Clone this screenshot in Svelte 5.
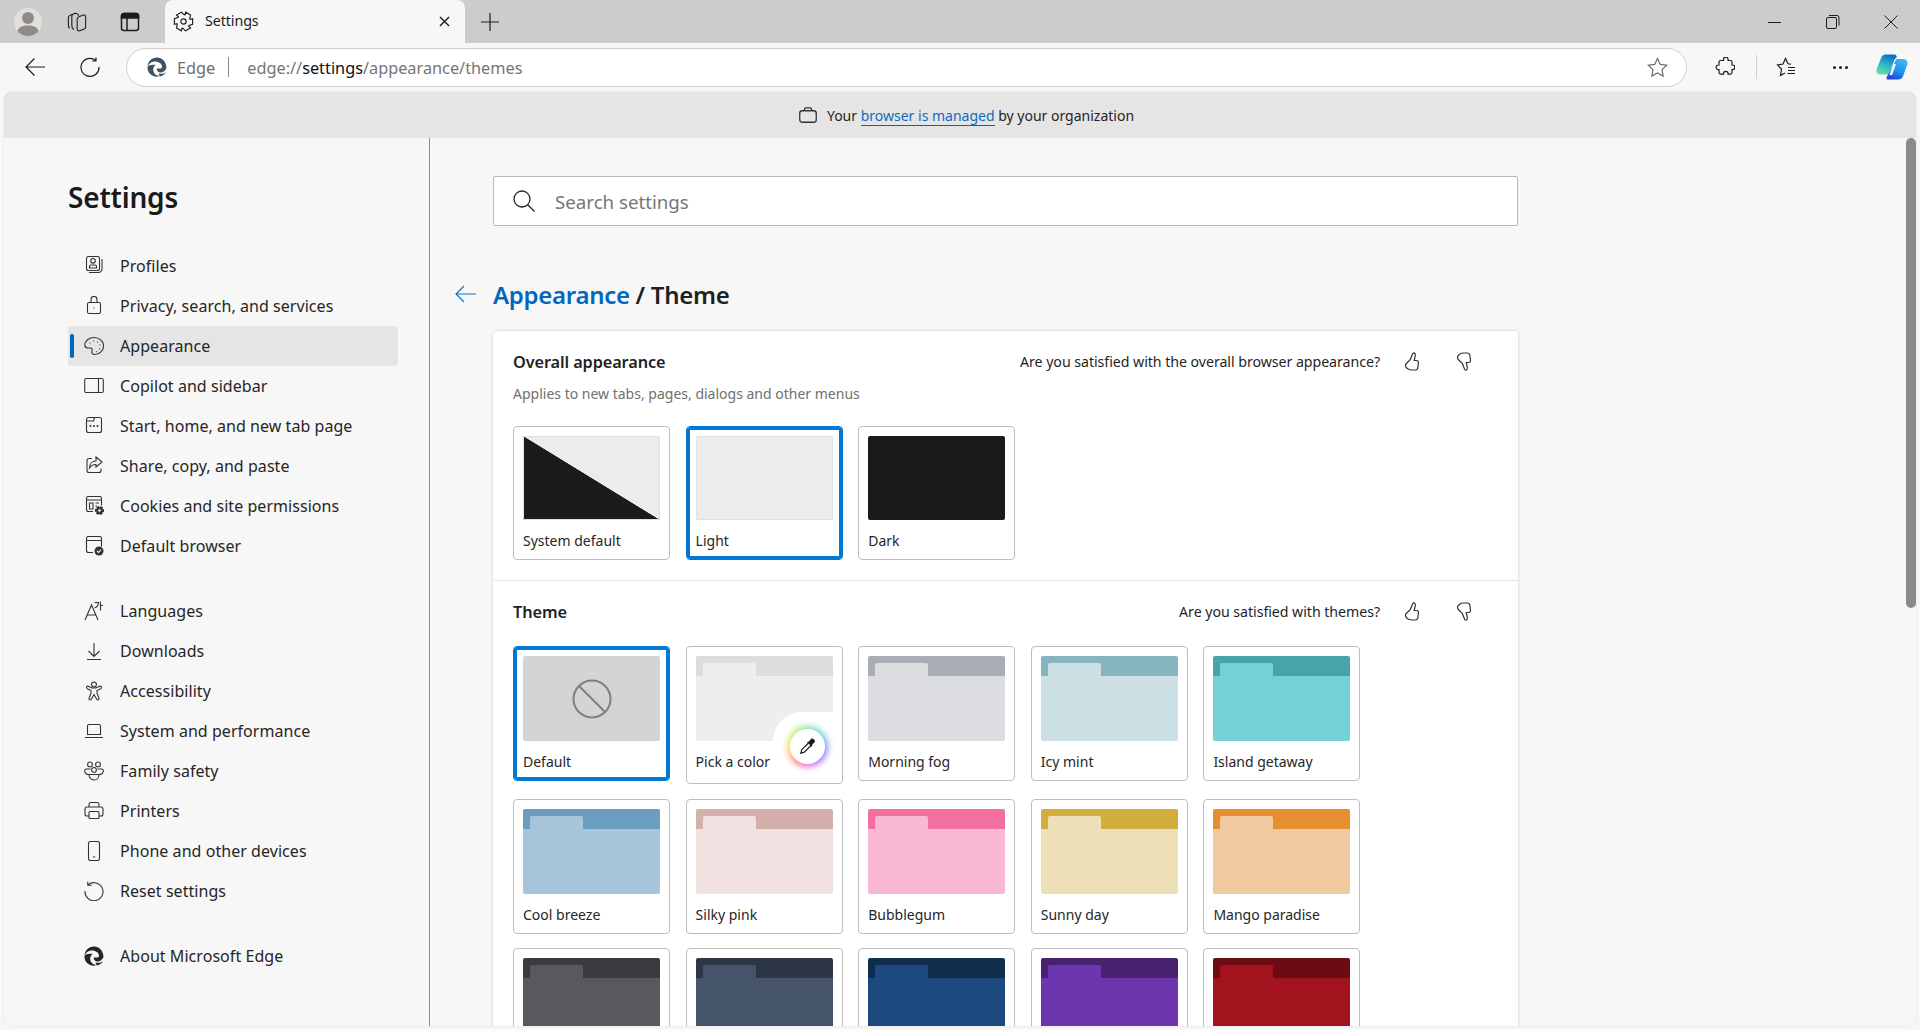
<script lang="ts">
	const icons: Record<string, string> = {
		profiles: 'M4.5 .5h9a2 2 0 0 1 2 2v10a2 2 0 0 1-2 2h-9a2 2 0 0 1-2-2v-10a2 2 0 0 1 2-2z M9 2.5a2.3 2.3 0 1 1 0 4.6 2.3 2.3 0 0 1 0-4.6z M5.5 12v-1.5A1.5 1.5 0 0 1 7 9h4a1.5 1.5 0 0 1 1.5 1.5V12z M18 3v10a3.5 3.5 0 0 1-3.5 3.5H5',
		privacy: 'M5 6.5h10A1.5 1.5 0 0 1 16.5 8v8a1.5 1.5 0 0 1-1.5 1.5H5A1.5 1.5 0 0 1 3.5 16V8A1.5 1.5 0 0 1 5 6.5z M7 6.5v-3a3 3 0 0 1 6 0v3 M10 11.6v.8',
		appearance: 'M10 1.5C5 1.5 .8 5 .8 9.3c0 1.9 1.6 2.7 3.2 2.7h2.4c1.5 0 2.1 1.3 1.6 2.6-.7 1.7.3 3.9 2.7 3.9 4.9 0 8.9-3.9 8.9-8.6S15 1.5 10 1.5z M9.5 4.6v.8 M13.5 5.6v.8 M16 8.6v.8 M15.5 12.6v.8 M12.5 15v.8 M6 6.6v.8',
		sidebar: 'M2.2 2.5h15.6a1.5 1.5 0 0 1 1.5 1.5v11a1.5 1.5 0 0 1-1.5 1.5H2.2A1.5 1.5 0 0 1 .7 15V4a1.5 1.5 0 0 1 1.5-1.5z M14.5 2.5v14',
		start: 'M4.5 1.5h11a2 2 0 0 1 2 2v11a2 2 0 0 1-2 2h-11a2 2 0 0 1-2-2v-11a2 2 0 0 1 2-2z M2.5 5h7l1-3.5',
		share: 'M8 2.5H5a2 2 0 0 0-2 2v10a2 2 0 0 0 2 2h10a2 2 0 0 0 2-2v-2 M12 1l6 5-6 5V8.5c-3 0-5 1-6.5 3.5 0-4 2.5-7 6.5-7z',
		cookies: 'M4.5 .5h11a2 2 0 0 1 2 2v7 M9 15.5H4.5a2 2 0 0 1-2-2v-11a2 2 0 0 1 2-2 M2.5 4h15 M5.5 7h3.5v6H5.5z M11.5 7h3.5 M11.5 10h1.5',
		browser: 'M4.5 .5h11a2 2 0 0 1 2 2v8 M9 16.5H4.5a2 2 0 0 1-2-2v-12a2 2 0 0 1 2-2 M2.5 4.5h15',
		languages: 'M1 19L7.5 4 14 19 M3.4 14h8.2 M10.5 1.5h4c0 2.5-1.5 4.5-3.8 5.5 M16.5 .5v9 M16.5 4.5H19',
		downloads: 'M10 2v13 M4.5 10l5.5 5.5 5.5-5.5 M3 18.5h14',
		accessibility: 'M10 1a2.4 2.4 0 1 1 0 4.8A2.4 2.4 0 0 1 10 1z M3 5.5c-.8.8-.4 1.8.3 2.2L7 9.5V12L5 17.5c-.4 1.3 1.6 2 2.3.8L10 13.5l2.7 4.8c.7 1.2 2.7.5 2.3-.8L13 12V9.5l3.7-1.8c.7-.4 1.1-1.4.3-2.2-.6-.6-1.3-.4-2 0L12 7H8L5 5.5c-.7-.4-1.4-.6-2 0z',
		laptop: 'M5 3.5h10A1.5 1.5 0 0 1 16.5 5v8.5h-13V5A1.5 1.5 0 0 1 5 3.5z M1 16.5h18',
		family: 'M6 1a2.4 2.4 0 1 1 0 4.8A2.4 2.4 0 0 1 6 1z M14 1a2.4 2.4 0 1 1 0 4.8A2.4 2.4 0 0 1 14 1z M10 6.5a2.4 2.4 0 1 1 0 4.8 2.4 2.4 0 0 1 0-4.8z M6.5 8H2.2C1 8 .5 9 .7 10.3c.3 2 2 3.2 4.3 3.2 M13.5 8h4.3c1.2 0 1.7 1 1.5 2.3-.3 2-2 3.2-4.3 3.2 M5 13.5h10c0 3.2-2.2 5.5-5 5.5s-5-2.3-5-5.5z',
		printer: 'M5 6V3.5A2 2 0 0 1 7 1.5h6a2 2 0 0 1 2 2V6 M5 15H3a2 2 0 0 1-2-2V8a2 2 0 0 1 2-2h14a2 2 0 0 1 2 2v5a2 2 0 0 1-2 2h-2 M6 10.5h8a1 1 0 0 1 1 1v5a1 1 0 0 1-1 1H6a1 1 0 0 1-1-1v-5a1 1 0 0 1 1-1z',
		phone: 'M6.5 .5h7a2 2 0 0 1 2 2v15a2 2 0 0 1-2 2h-7a2 2 0 0 1-2-2v-15a2 2 0 0 1 2-2z M8.8 16h2.4',
		reset: 'M4.2 3.8A9 9 0 1 1 1 10 M3.8 .5v3.8h3.8'
	};

	const edgeLogo = [
		'M19.5 11.2C19.5 5 15.2.5 10 .5 4.8.5.5 4.6.5 10c1-3.3 4.2-5.5 7.5-5.5 3.8 0 7 2.4 7 5.2 0 1.2-1 1.9-2.5 1.9H9.8c-.3 1.7.5 3 2.2 3.6 2.8 1 5.7-.7 7.5-4z',
		'M.5 10c-.2 4 2 7.5 5.7 9 2 .8 4.3.9 6.3.1-3.8-.3-6.3-3-6.3-6.5 0-2 1-3.7 2.6-4.6C5 7.500 1.300 8 .5 10z',
		'M12.8 19.500c2.600-.4 4.900-2 6.100-4-2 1.300-5 1.700-7.500 1z'
	];

	const navTop = [
		{ label: 'Profiles', icon: 'profiles' },
		{ label: 'Privacy, search, and services', icon: 'privacy' },
		{ label: 'Appearance', icon: 'appearance', active: true },
		{ label: 'Copilot and sidebar', icon: 'sidebar' },
		{ label: 'Start, home, and new tab page', icon: 'start', dots: true },
		{ label: 'Share, copy, and paste', icon: 'share' },
		{ label: 'Cookies and site permissions', icon: 'cookies', gear: true },
		{ label: 'Default browser', icon: 'browser', check: true }
	];

	const navBottom = [
		{ label: 'Languages', icon: 'languages' },
		{ label: 'Downloads', icon: 'downloads' },
		{ label: 'Accessibility', icon: 'accessibility' },
		{ label: 'System and performance', icon: 'laptop' },
		{ label: 'Family safety', icon: 'family' },
		{ label: 'Printers', icon: 'printer' },
		{ label: 'Phone and other devices', icon: 'phone' },
		{ label: 'Reset settings', icon: 'reset' }
	];

	const modes = [{ label: 'System default', kind: 'system' }, { label: 'Light', kind: 'light', selected: true }, { label: 'Dark', kind: 'dark' }];

	// the third row runs off the bottom of the page, its labels are never seen
	const themes = [
		{ label: 'Default', kind: 'none', selected: true },
		{ label: 'Pick a color', strip: '#dddddd', body: '#eeeeee', pick: true },
		{ label: 'Morning fog', strip: '#a9adb5', body: '#dcdde1' },
		{ label: 'Icy mint', strip: '#87b5bf', body: '#cce0e6' },
		{ label: 'Island getaway', strip: '#47a5a8', body: '#75d2d4' },
		{ label: 'Cool breeze', strip: '#6a9dbf', body: '#a6c5da' },
		{ label: 'Silky pink', strip: '#d4b0aa', body: '#f1e2e1' },
		{ label: 'Bubblegum', strip: '#f36fa0', body: '#f9b9d2' },
		{ label: 'Sunny day', strip: '#d2ad3b', body: '#ede0b9' },
		{ label: 'Mango paradise', strip: '#e58f30', body: '#f0c99e' },
		{ strip: '#3a3b40', body: '#58595e' },
		{ strip: '#2c3644', body: '#465469' },
		{ strip: '#112d4e', body: '#1c4a7e' },
		{ strip: '#46226f', body: '#6d35ae' },
		{ strip: '#6c0b12', body: '#a3131d' }
	];

	// six lobed gear outline
	function gear(cx: number, cy: number, outer: number, inner: number) {
		let d = '';
		for (let i = 0; i < 6; i++) {
			const a = (i * Math.PI) / 3;
			const pts = [-0.3, 0.3, 0.62, 0.74].map((o, j) => {
				const r = j < 2 ? outer : inner;
				return [cx + r * Math.cos(a + o), cy + r * Math.sin(a + o)];
			});
			d += `${i === 0 ? 'M' : 'L'}${pts[0][0].toFixed(2)} ${pts[0][1].toFixed(2)}`;
			d += `L${pts[1][0].toFixed(2)} ${pts[1][1].toFixed(2)}L${pts[2][0].toFixed(2)} ${pts[2][1].toFixed(2)}L${pts[3][0].toFixed(2)} ${pts[3][1].toFixed(2)}`;
		}
		return d + 'z';
	}

	const thumb = 'M9.800 .8c-1 0-1.500.8-1.700 2.200L6.400 7.300 2.300 11.500c-1.200 1.200-1 3 0 4l1.300 1.200c1 1 2.400 1.300 3.900 1.300h3.700c1.500 0 2.500-1 2.700-2.500l.6-5c.1-1.200-.7-2-1.800-2h-2.500l1-4.300C11.500 2.300 11 .8 9.800 .8z';
</script>

{#snippet edge(cls: string)}
	<svg class={cls} viewBox="0 0 20 20">
		{#each edgeLogo as d}<path {d} />{/each}
	</svg>
{/snippet}

{#snippet navRow(item: any)}
	<div class="nav-item" class:active={item.active}>
		<svg class="nav-icon" viewBox="0 0 20 20">
			<path d={icons[item.icon]} />
			{#if item.dots}
				<circle class="solid" cx="6.500" cy="10" r="1" /><circle class="solid" cx="10" cy="10" r="1" /><circle class="solid" cx="13.500" cy="10" r="1" />
			{/if}
			{#if item.gear}
				<path class="solid" d={gear(15.500, 14.500, 4.700, 3.300)} /><circle class="hole" cx="15.500" cy="14.500" r="1.300" />
			{/if}
			{#if item.check}
				<circle class="solid" cx="15" cy="15" r="4.500" /><path class="tick" d="M13 15l1.500 1.500 2.500-2.800" />
			{/if}
		</svg>
		<span>{item.label}</span>
	</div>
{/snippet}

{#snippet feedback(text: string)}
	<div class="feedback">
		<span class="feedback-text">{text}</span>
		<svg class="thumb" viewBox="0 0 15 19"><path d={thumb} /></svg>
		<svg class="thumb down" viewBox="0 0 15 19"><path d={thumb} /></svg>
	</div>
{/snippet}

<div class="window">
	<header class="tabstrip">
		<div class="avatar">
			<svg viewBox="0 0 28 28"><circle cx="14" cy="14" r="14" fill="#e3e0dc" /><circle cx="14" cy="10" r="6" fill="#8f8b86" /><path d="M3.500 23c1-4 5-5.500 10.500-5.500S23.500 19 24.500 23c-2.500 3.200-6.300 5-10.500 5s-8-1.800-10.500-5z" fill="#8f8b86" /></svg>
		</div>
		<svg class="strip-icon collections" viewBox="0 0 22 22"><path d="M6 2.500l-2.500 1C2 4 1.500 5 1.500 6.500v8c0 1.500.5 2.500 1.500 3.500 M10 1l-3 1.200c-1.200.5-1.700 1.300-1.700 2.800v10c0 1.500.5 3 2.200 4.500 M20.500 5.500v11c0 1-.5 1.700-1.500 2.100l-5 2c-1.500.5-2.800-.5-2.800-2V7.500c0-1 .5-1.700 1.500-2.100l5-2c1.500-.6 2.800.5 2.800 2.100z M13 4l-1.200-1.500c-.7-.8-1.500-1.100-2.500-.8" /></svg>
		<svg class="strip-icon vtabs" viewBox="0 0 20 20"><rect x="1.500" y="1.500" width="17" height="17" rx="2.500" /><path class="solid-bar" d="M1.500 6V4A2.500 2.500 0 0 1 4 1.500h12A2.500 2.500 0 0 1 18.500 4v2z" /><path d="M7 6v12.500" /></svg>
		<div class="tab">
			<svg class="tab-gear" viewBox="0 0 22 22"><path d={gear(11, 11, 10, 7.200)} /><circle cx="11" cy="11" r="2.800" /></svg>
			<span class="tab-title">Settings</span>
			<svg class="tab-close" viewBox="0 0 12 12"><path d="M1 1l10 10M11 1L1 11" /></svg>
		</div>
		<svg class="new-tab" viewBox="0 0 18 18"><path d="M9 0v18M0 9h18" /></svg>
		<div class="window-controls">
			<svg viewBox="0 0 14 14"><path d="M0 7.500h13" /></svg>
			<svg viewBox="0 0 14 14"><rect x=".5" y="2.500" width="10" height="11" rx="1.500" /><path d="M3 .5h8a2 2 0 0 1 2 2v8" /></svg>
			<svg viewBox="0 0 14 14"><path d="M.5 .5l13 13M13.500 .5l-13 13" /></svg>
		</div>
	</header>

	<div class="toolbar">
		<svg class="tool back" viewBox="0 0 20 20"><path d="M20 10H1M9.500 1.500L1 10l8.500 8.500" /></svg>
		<svg class="tool refresh" viewBox="0 0 20 20"><path d="M15.500 3.200A9 9 0 1 0 19 10 M16 .5v3.500h-3.800" /></svg>
		<div class="address">
			{@render edge('edge-small')}
			<span class="site">Edge</span>
			<span class="address-sep"></span>
			<span class="url">edge://<b>settings</b>/appearance/themes</span>
			<svg class="star" viewBox="0 0 21 21"><path d="M10.500 1.500l2.800 5.900 6.400.8-4.700 4.400 1.200 6.400-5.700-3.100-5.700 3.100 1.200-6.400L1.300 8.200l6.400-.8z" /></svg>
		</div>
		<svg class="tool ext" viewBox="0 0 20 20"><path d="M8.500 3V2.500a2.300 2.300 0 0 1 4.600 0V3.500h2.400a1.500 1.500 0 0 1 1.500 1.500v3h.6a2.300 2.300 0 0 1 0 4.600H17v3a1.500 1.500 0 0 1-1.500 1.500h-2.400v-.5a2.300 2.300 0 0 0-4.600 0v.5H5.500A1.500 1.500 0 0 1 4 15.600v-3h-.6a2.300 2.300 0 0 1 0-4.600H4V5a1.500 1.500 0 0 1 1.500-1.500h3z" /></svg>
		<span class="tool-sep"></span>
		<svg class="tool fav" viewBox="0 0 20 20"><path d="M15 7.200L12 6.800 9.500 1.500 7 7l-5.500 1 4 4-1 6.500L9 16 M12 10.500h7 M12 13.500h7 M11.500 16.500h7.500" /></svg>
		<div class="dots"><i></i><i></i><i></i></div>
		<svg class="copilot" viewBox="0 0 32 26">
			<defs>
				<linearGradient id="cl" x1=".6" y1="0" x2=".2" y2="1"><stop offset="0" stop-color="#0f6fc8" /><stop offset=".5" stop-color="#2bb8c8" /><stop offset="1" stop-color="#6fe0a0" /></linearGradient>
				<linearGradient id="cr" x1=".7" y1="0" x2=".3" y2="1"><stop offset="0" stop-color="#43b5f5" /><stop offset=".6" stop-color="#1a8fe8" /><stop offset="1" stop-color="#2540d8" /></linearGradient>
			</defs>
			<path fill="url(#cl)" d="M9.500 .5h9c1.500 0 2.500 1.500 2 3l-2 2-5 13.500c-.6 1.200-1.800 1.500-3 1.500H4c-3 0-4.500-2.500-3.500-5l5-12.500C6.300 1.500 7.500 .5 9.500 .5z" />
			<path fill="url(#cr)" d="M21 5h6c3.300 0 5.200 2.700 4.300 5.500l-4 11c-.9 2.500-2.500 4-5.300 4h-10c-1.500 0-1.900-1.400-1.200-2.800L19 8c.4-1.500 1-3 2-3z" />
			<path fill="#fff" d="M17.500 10h2.500l-4 11h-2.500z" />
		</svg>
	</div>

	<div class="page">
		<div class="banner">
			<svg class="brief" viewBox="0 0 18 16"><rect x=".75" y="3.750" width="16.500" height="11.500" rx="2.500" /><path d="M5.500 3.500V2A1.300 1.300 0 0 1 6.800 .8h4.400A1.300 1.300 0 0 1 12.500 2v1.500" /></svg>
			<span>Your <a href="#managed">browser is managed</a> by your organization</span>
		</div>

		<div class="content">
			<aside class="sidebar">
				<h1>Settings</h1>
				<nav class="group first">
					{#each navTop as item}{@render navRow(item)}{/each}
				</nav>
				<nav class="group second">
					{#each navBottom as item}{@render navRow(item)}{/each}
				</nav>
				<div class="nav-item about">
					{@render edge('edge-about')}
					<span>About Microsoft Edge</span>
				</div>
			</aside>

			<main class="main">
				<div class="search">
					<svg viewBox="0 0 22 22"><path d="M9 1a8 8 0 1 1 0 16A8 8 0 0 1 9 1zM14.700 14.700L21.500 21.500" /></svg>
					<span>Search settings</span>
				</div>

				<div class="crumb">
					<svg viewBox="0 0 21 18"><path d="M21 9H1M9 1L1 9l8 8" /></svg>
					<h2><span class="crumb-link">Appearance</span> / Theme</h2>
				</div>

				<section class="card">
					<div class="block">
						<div class="block-head">
							<h3>Overall appearance</h3>
							{@render feedback('Are you satisfied with the overall browser appearance?')}
						</div>
						<p class="desc">Applies to new tabs, pages, dialogs and other menus</p>
						<div class="tiles modes">
							{#each modes as mode}
								<div class="tile mode" class:selected={mode.selected}>
									<div class="thumbnail {mode.kind}"></div>
									<div class="tile-label">{mode.label}</div>
								</div>
							{/each}
						</div>
					</div>
					<div class="block theme-block">
						<div class="block-head">
							<h3>Theme</h3>
							{@render feedback('Are you satisfied with themes?')}
						</div>
						<div class="tiles themes">
							{#each themes as theme}
								<div class="tile" class:selected={theme.selected} class:pick={theme.pick}>
									{#if theme.kind === 'none'}
										<div class="thumbnail none">
											<svg viewBox="0 0 40 40"><circle cx="20" cy="20" r="18.500" /><path d="M7 7l26 26" /></svg>
										</div>
									{:else}
										<div class="thumbnail folder" style="--strip:{theme.strip};--body:{theme.body}">
											<i class="folder-tab"></i>
											{#if theme.pick}<i class="notch"></i>{/if}
										</div>
									{/if}
									{#if theme.label}<div class="tile-label">{theme.label}</div>{/if}
									{#if theme.pick}
										<div class="picker">
											<i class="glow"></i>
											<i class="disc"></i>
											<svg viewBox="0 0 16 16"><path class="dropper-body" d="M8.500 5L1.800 11.700 .8 15.200l3.500-1L11 7.500" /><path class="dropper-head" d="M7 4l2-.4L11 1c1.300-1.600 5 1.200 3.700 3.300L12.300 6.500 12 9z" /></svg>
										</div>
									{/if}
								</div>
							{/each}
						</div>
					</div>
				</section>
			</main>
			<div class="scrollbar"></div>
		</div>
	</div>
</div>

<style>
	:global(body) {
		background: #f7f7f7;
		overflow: hidden;
	}

	.window {
		display: flex;
		flex-direction: column;
		height: 1030px;
		overflow: hidden;
		font-family: 'Noto Sans', 'Open Sans', sans-serif;
		color: #1a1a1a;
	}

	svg {
		flex: none;
		display: block;
		fill: none;
		stroke: #1c1c1c;
		stroke-width: 1.2;
	}

	/* tab strip */
	.tabstrip {
		display: flex;
		align-items: center;
		height: 43px;
		flex: none;
		background: #cccccc;
	}

	.avatar {
		width: 28px;
		height: 28px;
		margin-left: 14px;
	}

	.avatar svg {
		width: 28px;
		height: 28px;
		stroke: none;
	}

	.strip-icon {
		width: 20px;
		height: 20px;
	}

	.collections {
		margin-left: 25px;
	}

	.vtabs {
		margin-left: 33px;
		stroke-width: 1.500;
	}

	.solid-bar {
		fill: #1c1c1c;
	}

	.tab {
		display: flex;
		align-items: center;
		align-self: stretch;
		width: 300px;
		margin-left: 25px;
		padding-left: 8px;
		box-sizing: border-box;
		background: #f7f7f7;
		border-radius: 8px 8px 0 0;
	}

	.tab-gear {
		width: 21px;
		height: 21px;
	}

	.tab-title {
		margin-left: 11px;
		margin-bottom: 2px;
		font-size: 14.300px;
		letter-spacing: -0.1px;
	}

	.tab-close {
		width: 11px;
		height: 11px;
		margin-left: auto;
		margin-right: 15px;
		stroke-width: 1.500;
	}

	.new-tab {
		width: 18px;
		height: 18px;
		margin-left: 16px;
	}

	.window-controls {
		display: flex;
		align-items: center;
		gap: 44px;
		margin-left: auto;
		margin-right: 22px;
	}

	.window-controls svg {
		width: 14px;
		height: 14px;
		stroke-width: 1;
	}

	/* toolbar */
	.toolbar {
		display: flex;
		align-items: center;
		height: 49px;
		flex: none;
		padding-bottom: 1px;
		box-sizing: border-box;
		background: #f7f7f7;
	}

	.tool {
		width: 20px;
		height: 20px;
	}

	.back {
		margin-left: 25px;
	}

	.refresh {
		margin-left: 35px;
	}

	.address {
		display: flex;
		align-items: center;
		width: 1561px;
		height: 39px;
		margin-left: 26px;
		padding-left: 20px;
		box-sizing: border-box;
		background: #fff;
		border: 1px solid #cfcfcf;
		border-radius: 20px;
	}

	.address :global(.edge-small) {
		width: 20px;
		height: 20px;
		stroke: none;
		fill: #3f5366;
	}

	.site {
		margin-left: 10px;
		margin-top: 2px;
		font-size: 16.300px;
		color: #6e6e6e;
	}

	.address-sep {
		width: 1px;
		height: 20px;
		margin-left: 13px;
		background: #8a8a8a;
	}

	.url {
		margin-left: 18px;
		margin-top: 2px;
		font-size: 16.300px;
		color: #767676;
	}

	.url b {
		font-weight: 400;
		color: #111;
	}

	.star {
		width: 21px;
		height: 21px;
		margin-left: auto;
		margin-right: 18px;
		stroke: #6b6b6b;
	}

	.ext {
		margin-left: 28px;
	}

	.tool-sep {
		width: 1px;
		height: 24px;
		margin-left: 21px;
		background: #cfcfcf;
	}

	.fav {
		margin-left: 19px;
	}

	.dots {
		display: flex;
		gap: 3px;
		margin-left: 37px;
	}

	.dots i {
		width: 3px;
		height: 3px;
		border-radius: 50%;
		background: #1c1c1c;
	}

	.copilot {
		width: 32px;
		height: 26px;
		margin-left: 28px;
		stroke: none;
	}

	/* page surface */
	.page {
		display: flex;
		flex-direction: column;
		height: 934px;
		flex: none;
		margin: 0 4px;
		overflow: hidden;
		background: #f7f7f7;
		border-radius: 8px;
		box-shadow: 0 0 2px rgba(0, 0, 0, 0.15);
	}

	.banner {
		display: flex;
		align-items: center;
		justify-content: center;
		gap: 10px;
		height: 46px;
		flex: none;
		padding-left: 13px;
		box-sizing: border-box;
		background: #e5e5e5;
		font-size: 14px;
		color: #262626;
	}

	.brief {
		width: 18px;
		height: 16px;
		stroke: #333;
		stroke-width: 1.300;
	}

	.banner a {
		color: #0f6cbd;
		text-decoration: none;
		border-bottom: 1px solid #0067b8;
	}

	.content {
		position: relative;
		display: flex;
		flex: 1;
		min-height: 0;
	}

	/* sidebar */
	.sidebar {
		width: 426px;
		flex: none;
		box-sizing: border-box;
		padding: 41px 0 0 64px;
		border-right: 1px solid #8c8c8c;
	}

	h1 {
		margin: 0;
		font-size: 28px;
		line-height: 36px;
		font-weight: 600;
		color: #1a1a1a;
		letter-spacing: -0.2px;
	}

	.group {
		display: flex;
		flex-direction: column;
	}

	.first {
		margin-top: 31px;
	}

	.second {
		margin-top: 25px;
	}

	.nav-item {
		position: relative;
		display: flex;
		align-items: center;
		width: 330px;
		height: 40px;
		padding-left: 16px;
		box-sizing: border-box;
		border-radius: 3px;
		font-size: 16px;
		letter-spacing: 0.05px;
		color: #262626;
	}

	.nav-item.active {
		background: #e5e5e5;
	}

	.nav-item.active::before {
		content: '';
		position: absolute;
		left: 2px;
		top: 8px;
		width: 4px;
		height: 24px;
		border-radius: 2px;
		background: #0067c0;
	}

	.nav-icon {
		width: 20px;
		height: 20px;
		margin-right: 16px;
		stroke: #333;
		stroke-width: 1.100;
	}

	.solid {
		fill: #333;
		stroke: none;
	}

	.hole {
		fill: #f7f7f7;
		stroke: none;
	}

	.tick {
		stroke: #f7f7f7;
	}

	.about {
		margin-top: 25px;
	}

	.about :global(.edge-about) {
		width: 20px;
		height: 20px;
		margin-right: 16px;
		stroke: none;
		fill: #262626;
	}

	/* main column */
	.main {
		flex: 1;
		min-width: 0;
		padding: 38px 0 0 63px;
		overflow: hidden;
	}

	.search {
		display: flex;
		align-items: center;
		width: 1025px;
		height: 50px;
		box-sizing: border-box;
		padding-left: 19px;
		background: #fff;
		border: 1px solid #b8b8b8;
		border-radius: 2px;
		font-size: 18.700px;
		color: #767676;
	}

	.search svg {
		width: 22px;
		height: 22px;
		margin-right: 20px;
		stroke: #262626;
		stroke-width: 1.300;
	}

	.crumb {
		position: relative;
		height: 36px;
		margin-top: 50px;
		display: flex;
		align-items: center;
	}

	.crumb svg {
		position: absolute;
		left: -38px;
		top: 9px;
		width: 21px;
		height: 18px;
		stroke: #0078d4;
	}

	h2 {
		margin: 0;
		font-size: 24px;
		font-weight: 600;
		color: #1f1f1f;
		letter-spacing: -0.3px;
	}

	.crumb-link {
		color: #0067c0;
	}

	.card {
		width: 1025px;
		margin-top: 19px;
		background: #fff;
		border-radius: 4px;
		box-shadow: 0 0 3px rgba(0, 0, 0, 0.2);
		padding-bottom: 40px;
	}

	.block {
		padding: 20px 47px 20px 20px;
	}

	.theme-block {
		border-top: 1px solid #e6e6e6;
	}

	.block-head {
		display: flex;
		align-items: center;
		justify-content: space-between;
		height: 22px;
	}

	h3 {
		margin: 0;
		font-size: 16.300px;
		font-weight: 600;
		color: #1f1f1f;
		letter-spacing: -0.1px;
	}

	.feedback {
		display: flex;
		align-items: center;
		font-size: 14.200px;
		letter-spacing: -0.05px;
		color: #1f1f1f;
	}

	.feedback-text {
		margin-bottom: 2px;
	}

	.thumb {
		width: 15px;
		height: 19px;
		margin-top: -2px;
		margin-left: 24px;
		stroke: #333;
	}

	.thumb.down {
		margin-left: 37px;
		transform: scaleY(-1);
	}

	.desc {
		margin: 11px 0 0;
		line-height: 20px;
		font-size: 14px;
		color: #707070;
	}

	.tiles {
		display: grid;
		grid-template-columns: repeat(5, 157px);
		column-gap: 15.600px;
		row-gap: 14.600px;
		align-items: start;
	}

	.modes {
		margin-top: 22px;
	}

	.themes {
		margin-top: 23px;
	}

	.tile {
		position: relative;
		box-sizing: border-box;
		padding: 9px 9px 8px;
		background: #fff;
		border: 1px solid #bdbdbd;
		border-radius: 4px;
	}

	.tile.selected {
		border-color: #0078d4;
		box-shadow: inset 0 0 0 3px #0078d4;
	}

	.tile.pick {
		padding-bottom: 11px;
	}

	.thumbnail {
		position: relative;
		height: 85px;
		overflow: hidden;
		border-radius: 2px;
	}

	.mode .thumbnail {
		height: 84px;
	}

	.thumbnail.light,
	.thumbnail.system {
		background: #ececec;
		box-shadow: inset 0 0 0 1px #e0e0e0;
	}

	.thumbnail.system {
		background: linear-gradient(to top right, #1b1b1b 49.800%, #ececec 50.200%);
	}

	.thumbnail.dark {
		background: #1b1b1b;
	}

	.thumbnail.none {
		display: flex;
		align-items: center;
		justify-content: center;
		background: #d4d4d4;
	}

	.thumbnail.none svg {
		width: 40px;
		height: 40px;
		stroke: #7f7f7f;
		stroke-width: 2;
	}

	.folder {
		background: linear-gradient(var(--strip) 20px, var(--body) 20px);
	}

	.folder-tab {
		position: absolute;
		left: 7px;
		top: 7px;
		width: 53px;
		height: 13px;
		border-radius: 2px 2px 0 0;
		background: var(--body);
	}

	.notch {
		position: absolute;
		right: 0;
		bottom: 0;
		width: 60px;
		height: 29px;
		background: #fff;
		border-top-left-radius: 29px;
	}

	.tile-label {
		margin-top: 11px;
		line-height: 20px;
		font-size: 14px;
		color: #262626;
	}

	.picker {
		position: absolute;
		left: 103px;
		top: 82px;
		width: 35px;
		height: 35px;
	}

	.picker i {
		position: absolute;
		inset: 0;
		border-radius: 50%;
	}

	.glow {
		inset: -3px !important;
		background: conic-gradient(#78e8a0, #6cc8e8 60deg, #8a7cff 110deg, #e070f0 170deg, #ff7088 210deg, #ffe066 270deg, #b8ec70 320deg, #78e8a0);
		filter: blur(3px);
	}

	.disc {
		background: #fff;
	}

	.picker svg {
		position: absolute;
		left: 10px;
		top: 9px;
		width: 16px;
		height: 16px;
	}

	.dropper-head {
		fill: #1c1c1c;
		stroke: none;
	}

	.scrollbar {
		position: absolute;
		top: 0;
		right: 0;
		width: 10px;
		height: 470px;
		background: #8a8a8a;
		border-radius: 5px;
	}
</style>
